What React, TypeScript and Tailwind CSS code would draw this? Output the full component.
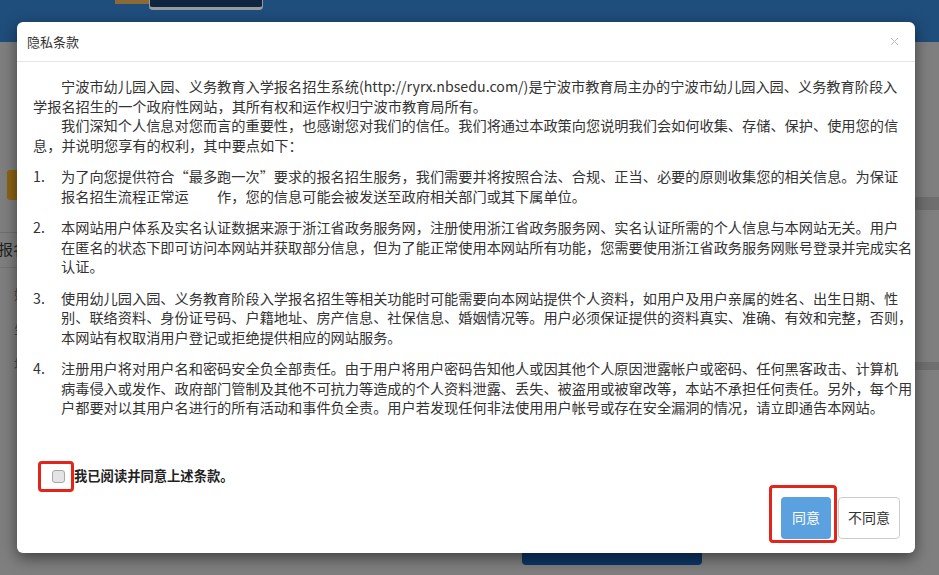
import { X } from 'lucide-react';

const items: string[][] = [
  [
    '为了向您提供符合“最多跑一次”要求的报名招生服务，我们需要并将按照合法、合规、正当、必要的原则收集您的相关信息。为保证',
    '报名招生流程正常运\u3000\u3000作，您的信息可能会被发送至政府相关部门或其下属单位。',
  ],
  [
    '本网站用户体系及实名认证数据来源于浙江省政务服务网，注册使用浙江省政务服务网、实名认证所需的个人信息与本网站无关。用户',
    '在匿名的状态下即可访问本网站并获取部分信息，但为了能正常使用本网站所有功能，您需要使用浙江省政务服务网账号登录并完成实名',
    '认证。',
  ],
  [
    '使用幼儿园入园、义务教育阶段入学报名招生等相关功能时可能需要向本网站提供个人资料，如用户及用户亲属的姓名、出生日期、性',
    '别、联络资料、身份证号码、户籍地址、房产信息、社保信息、婚姻情况等。用户必须保证提供的资料真实、准确、有效和完整，否则，',
    '本网站有权取消用户登记或拒绝提供相应的网站服务。',
  ],
  [
    '注册用户将对用户名和密码安全负全部责任。由于用户将用户密码告知他人或因其他个人原因泄露帐户或密码、任何黑客政击、计算机',
    '病毒侵入或发作、政府部门管制及其他不可抗力等造成的个人资料泄露、丢失、被盗用或被窜改等，本站不承担任何责任。另外，每个用',
    '户都要对以其用户名进行的所有活动和事件负全责。用户若发现任何非法使用用户帐号或存在安全漏洞的情况，请立即通告本网站。',
  ],
];

function PageBehind() {
  return (
    <div className="flex h-full flex-col">
      {/* top header of the page, dimmed by the backdrop */}
      <header className="flex h-[42px] shrink-0 items-start bg-[#1f4d7c] pl-[115px]">
        <div className="h-[4px] w-[34px] bg-[#8a6a36]" />
        <div className="h-[10px] w-[114px] rounded-b-[4px] border-x border-b-[3px] border-[#9a9a9a] bg-[#0e2440]" />
      </header>

      <div className="flex flex-1">
        {/* left column */}
        <div className="flex w-[500px] flex-col">
          <div className="ml-[7px] mt-[128px] h-[30px] w-[120px] rounded-[3px] bg-[#8c6414]" />
          <div className="mt-[32px] border-t border-[#6e6e6e] pt-[6px] text-[15px] leading-[20px] text-[#1e1e1e] -ml-[2px]">
            报名信息
          </div>
          <div className="mt-[8px] border-t border-[#737373]" />
          <div className="flex flex-col gap-[15px] pl-[14px] pt-[16px] text-[13px] leading-[20px] text-[#4a4a4a]">
            <span>姓名</span>
            <span>生日</span>
            <span>地址</span>
          </div>
        </div>
        {/* center column */}
        <div className="flex w-[220px] flex-col">
          <div className="mb-[10px] ml-[22px] mt-auto h-[30px] w-[180px] rounded-[4px] bg-[#0d3766]" />
        </div>
        {/* right column */}
        <div className="flex flex-1 flex-col">
          <div className="mt-[155px] h-[13px] bg-[#6f6f6f]" />
          <div className="mt-[152px] h-[8px] bg-[#707070]" />
        </div>
      </div>
    </div>
  );
}

export default function App() {
  return (
    <div className="relative h-[575px] w-full overflow-hidden bg-[#7f7f7f] font-['Microsoft_YaHei','Noto_Sans_CJK_SC',sans-serif] text-[#333]">
      <PageBehind />

      {/* modal */}
      <div className="absolute left-[17px] top-[22px] flex w-[898px] flex-col rounded-[6px] bg-white shadow-[0_5px_15px_rgba(0,0,0,0.5)]">
        <div className="flex h-[40px] items-center justify-between border-b border-[#e5e5e5] pl-[10px] pr-[14px]">
          <h4 className="text-[13px] leading-none text-[#333]">隐私条款</h4>
          <button className="text-[#b8b8b8]" aria-label="关闭">
            <X className="h-[13px] w-[13px]" strokeWidth={1.75} />
          </button>
        </div>

        <div className="whitespace-nowrap pl-4 pr-[8px] pt-[15px] text-[14.2px] leading-[19.5px]">
          <p className="indent-[28px]">
            宁波市幼儿园入园、义务教育入学报名招生系统(http://ryrx.nbsedu.com/)是宁波市教育局主办的宁波市幼儿园入园、义务教育阶段入
            <br />
            学报名招生的一个政府性网站，其所有权和运作权归宁波市教育局所有。
          </p>
          <p className="indent-[28px]">
            我们深知个人信息对您而言的重要性，也感谢您对我们的信任。我们将通过本政策向您说明我们会如何收集、存储、保护、使用您的信
            <br />
            息，并说明您享有的权利，其中要点如下：
          </p>

          <ol className="mt-[12px] flex flex-col gap-[12px]">
            {items.map((lines, i) => (
              <li key={i} className="flex">
                <span className="w-[28px] shrink-0">{i + 1}.</span>
                <span>
                  {lines.map((line, j) => (
                    <span key={j} className="block">
                      {line}
                    </span>
                  ))}
                </span>
              </li>
            ))}
          </ol>
        </div>

        {/* agree checkbox */}
        <div className="relative mt-[43px] flex h-[31px] items-center pl-[35px]">
          <input
            type="checkbox"
            className="h-[13px] w-[13px] appearance-none rounded-[3px] border border-[#a8a8a8] bg-[#e4e4e4]"
          />
          <label className="ml-[9px] text-[13.3px] font-bold leading-none text-[#222]">我已阅读并同意上述条款。</label>
          <span className="absolute left-[21px] top-0 h-[31px] w-[36px] rounded-[4px] border-[3px] border-[#e3241b]" />
        </div>

        {/* footer */}
        <div className="mt-[5px] flex justify-end gap-[7px] pb-[14px] pr-[15px]">
          <div className="relative">
            <button className="h-[42px] w-[50px] rounded-[4px] bg-[#5ba0df] text-[14px] text-white">同意</button>
            <span className="absolute -left-[12px] -top-[12px] h-[58px] w-[68px] rounded-[4px] border-[3px] border-[#e3241b]" />
          </div>
          <button className="h-[42px] w-[62px] rounded-[4px] border border-[#ccc] bg-white text-[14px] text-[#333]">
            不同意
          </button>
        </div>
      </div>
    </div>
  );
}
